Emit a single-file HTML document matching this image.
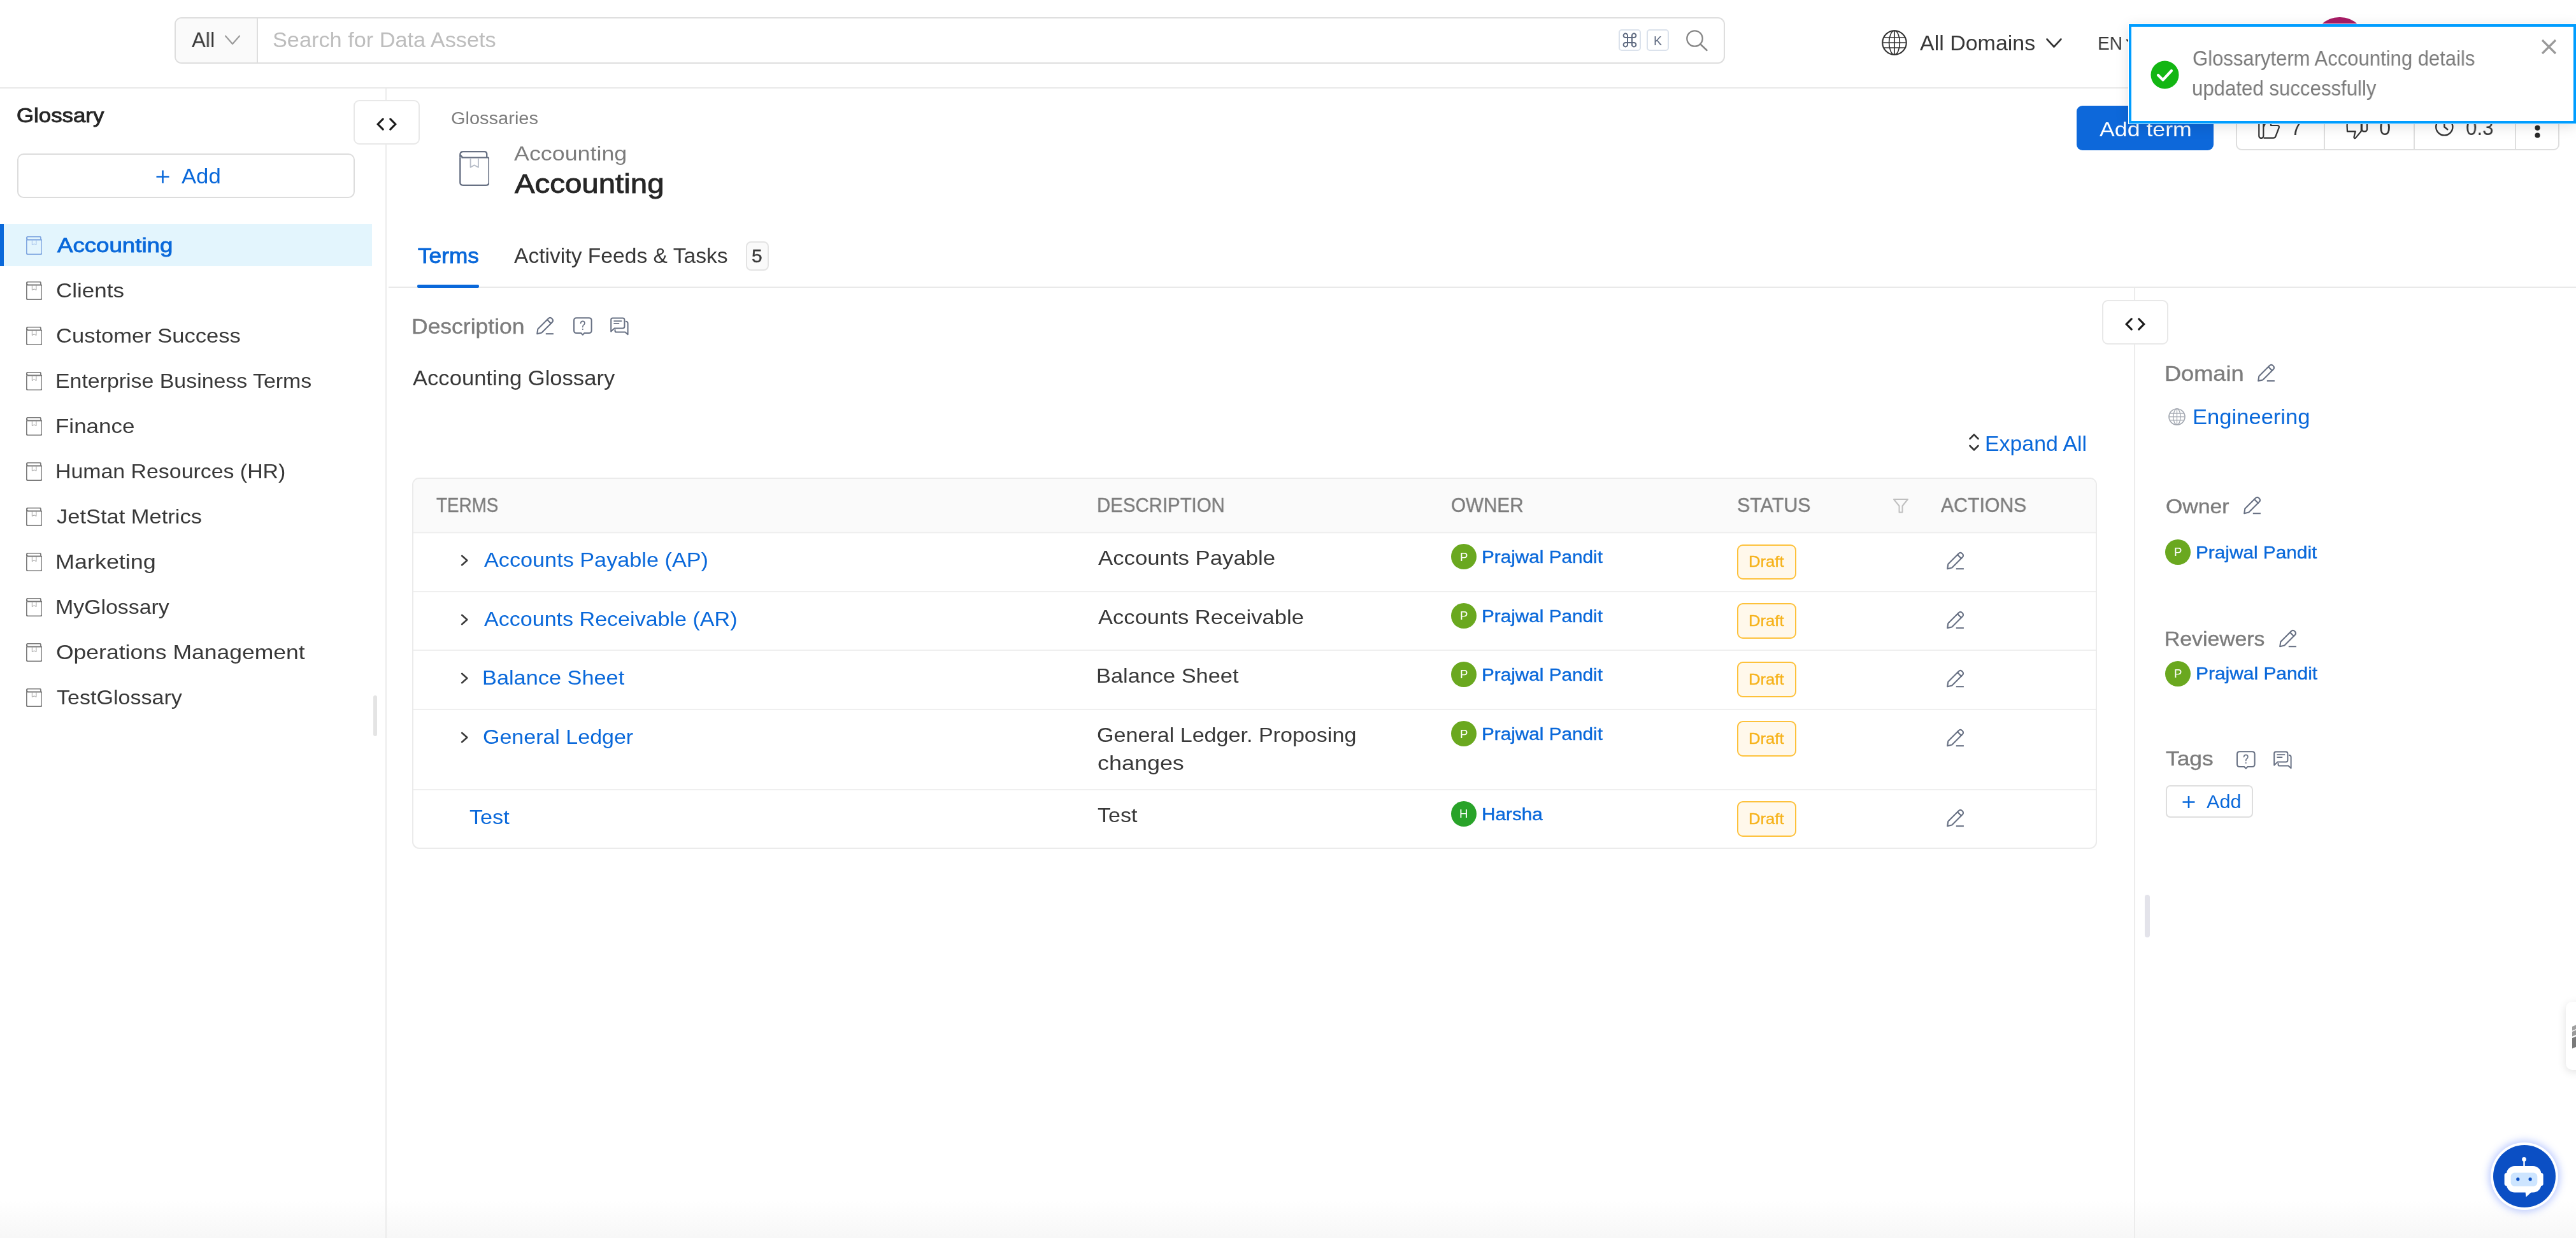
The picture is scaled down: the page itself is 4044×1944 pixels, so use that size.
<!DOCTYPE html><html><head><meta charset="utf-8"><title>Glossary</title><style>html,body{margin:0;padding:0;width:4044px;height:1944px;overflow:hidden;background:#fff;font-family:"Liberation Sans",sans-serif;}.a{position:absolute;}.t{position:absolute;white-space:nowrap;line-height:1;will-change:transform;}</style></head><body><div class="a" style="left:0px;top:1885px;width:4044px;height:59px;background:linear-gradient(to bottom,rgba(247,247,247,0),rgba(247,247,247,1));"></div>
<div class="a" style="left:0px;top:137px;width:4044px;height:2px;background:#e9e9e9;"></div>
<div class="a" style="left:274px;top:27px;width:2434px;height:73px;box-sizing:border-box;border:2px solid #dedede;border-radius:11px;background:#fff;overflow:hidden;"><div class="a" style="left:0;top:0;width:127px;height:73px;background:#fafafa;border-right:2px solid #dedede;"></div></div>
<div class="t" id="t_all" style="left:301.00px;top:46.01px;font-size:33.43px;letter-spacing:0.000px;color:#383838;transform:scaleX(0.9764);transform-origin:0 0;">All</div>
<svg class="a" style="left:352px;top:54px;" width="26" height="18" viewBox="0 0 26 18" fill="none"><path d="M2 2.5 L13 15 L24 2.5" stroke="#9a9a9a" stroke-width="2.2" stroke-linecap="round" stroke-linejoin="round"/></svg>
<div class="t" id="t_search" style="left:428.00px;top:46.31px;font-size:33.28px;letter-spacing:0.000px;color:#bdbdbd;transform:scaleX(1.0309);transform-origin:0 0;">Search for Data Assets</div>
<div class="a" style="left:2541px;top:46px;width:35px;height:34px;box-sizing:border-box;border:2px solid #dbe2ec;border-radius:5px;"></div>
<div class="a" style="left:2585px;top:46px;width:35px;height:34px;box-sizing:border-box;border:2px solid #dbe2ec;border-radius:5px;"></div>
<svg class="a" style="left:2547px;top:51px;" width="23" height="24" viewBox="0 0 23 24" fill="none"><path d="M8 8 H15 V16 H8 Z M8 8 V5.2 A3.2 3.2 0 1 0 4.8 8 H8 M15 8 V5.2 A3.2 3.2 0 1 1 18.2 8 H15 M8 16 V18.8 A3.2 3.2 0 1 1 4.8 16 H8 M15 16 V18.8 A3.2 3.2 0 1 0 18.2 16 H15" stroke="#5f6a80" stroke-width="2"/></svg>
<div class="t" id="t_k" style="left:2595.75px;top:54.50px;font-size:19.62px;letter-spacing:-3.000px;color:#5f6a80;">K</div>
<svg class="a" style="left:2646px;top:46px;" width="36" height="35" viewBox="0 0 36 35" fill="none"><circle cx="14.5" cy="14.5" r="12.2" stroke="#858585" stroke-width="2.3"/><path d="M23.5 23.5 L33.5 33" stroke="#858585" stroke-width="2.5" stroke-linecap="round"/></svg>
<svg class="a" style="left:2954px;top:46.5px;" width="40" height="40" viewBox="0 0 40 40" fill="none"><circle cx="20.0" cy="20.0" r="18.75" stroke="#333" stroke-width="2.1"/><ellipse cx="20.0" cy="20.0" rx="8.4" ry="18.75" stroke="#333" stroke-width="1.6800000000000002"/><path d="M2.1 20.0 H37.9 M20.0 2.1 V37.9 M4.0 12.0 H36.0 M4.0 28.0 H36.0" stroke="#333" stroke-width="1.6800000000000002"/></svg>
<div class="t" id="t_domains" style="left:3014.40px;top:50.51px;font-size:33.14px;letter-spacing:0.000px;color:#383838;transform:scaleX(1.0255);transform-origin:0 0;">All Domains</div>
<svg class="a" style="left:3211px;top:59px;" width="27" height="18" viewBox="0 0 27 18" fill="none"><path d="M2.5 2.5 L13.5 14.5 L24.5 2.5" stroke="#333" stroke-width="2.6" stroke-linecap="round" stroke-linejoin="round"/></svg>
<div class="t" id="t_en" style="left:3293.00px;top:51.72px;font-size:30.38px;letter-spacing:0.000px;color:#383838;transform:scaleX(0.9250);transform-origin:0 0;">EN</div>
<svg class="a" style="left:3337px;top:60px;" width="20" height="14" viewBox="0 0 20 14" fill="none"><path d="M2 2.5 L10 11 L18 2.5" stroke="#333" stroke-width="2.4" stroke-linecap="round"/></svg>
<div class="a" style="left:3632px;top:26.7px;width:81.5px;height:81.5px;border-radius:50%;background:#a81c66;"></div>
<div class="a" style="left:605px;top:139px;width:2px;height:1805px;background:#ececec;"></div>
<div class="t" id="t_glossary" style="left:26.00px;top:166.00px;font-size:31.54px;letter-spacing:0.000px;color:#262626;-webkit-text-stroke:0.9px currentColor;transform:scaleX(1.1041);transform-origin:0 0;">Glossary</div>
<div class="a" style="left:27px;top:241px;width:530px;height:70px;box-sizing:border-box;border:2px solid #dcdcdc;border-radius:10px;background:#fff;"></div>
<svg class="a" style="left:244px;top:266px;" width="23" height="23" viewBox="0 0 23 23" fill="none"><path d="M11.5 1.5 V21.5 M1.5 11.5 H21.5" stroke="#0968da" stroke-width="2.6"/></svg>
<div class="t" id="t_add" style="left:284.55px;top:261.30px;font-size:32.41px;letter-spacing:0.000px;color:#0968da;transform:scaleX(1.0691);transform-origin:0 0;">Add</div>
<div class="a" style="left:0px;top:351.5px;width:584px;height:66.5px;background:#e3f5fd;"></div>
<div class="a" style="left:0px;top:351.5px;width:6px;height:66.5px;background:#0968da;"></div>
<svg class="a" style="left:41px;top:371px;" width="25" height="29" viewBox="0 0 25 29" fill="none"><g transform="scale(0.5435,0.5273)"><path d="M1.3 10.3 V49.5 Q1.3 53.8 5.6 53.8 H41.2 Q45.6 53.8 45.6 49.5 V12.4 Q45.6 10.4 43.6 10.4 H3.4" stroke="#7fa6e0" stroke-width="3.4" stroke-linejoin="round"/><path d="M1.3 10.3 V6 Q1.3 1.2 6 1.2 H38.8 Q42.3 1.2 42.3 4.8 V10.4" stroke="#7fa6e0" stroke-width="3.4" stroke-linejoin="round"/><path d="M1.3 6 L5.2 10.4" stroke="#7fa6e0" stroke-width="3.4"/><path d="M17.2 11 V25.8 L23.1 22.4 L29.3 25.8 V11" stroke="#9fbde9" stroke-width="1.8" stroke-linejoin="round"/></g></svg>
<div class="t" id="t_side0" style="left:89.50px;top:369.00px;font-size:32.27px;letter-spacing:0.000px;color:#0968da;-webkit-text-stroke:0.9px currentColor;transform:scaleX(1.1358);transform-origin:0 0;">Accounting</div>
<svg class="a" style="left:41px;top:442px;" width="25" height="29" viewBox="0 0 25 29" fill="none"><g transform="scale(0.5435,0.5273)"><path d="M1.3 10.3 V49.5 Q1.3 53.8 5.6 53.8 H41.2 Q45.6 53.8 45.6 49.5 V12.4 Q45.6 10.4 43.6 10.4 H3.4" stroke="#7a7a7a" stroke-width="3.4" stroke-linejoin="round"/><path d="M1.3 10.3 V6 Q1.3 1.2 6 1.2 H38.8 Q42.3 1.2 42.3 4.8 V10.4" stroke="#7a7a7a" stroke-width="3.4" stroke-linejoin="round"/><path d="M1.3 6 L5.2 10.4" stroke="#7a7a7a" stroke-width="3.4"/><path d="M17.2 11 V25.8 L23.1 22.4 L29.3 25.8 V11" stroke="#9a9a9a" stroke-width="1.8" stroke-linejoin="round"/></g></svg>
<div class="t" id="t_side1" style="left:88.00px;top:440.00px;font-size:32.27px;letter-spacing:0.000px;color:#383838;transform:scaleX(1.0842);transform-origin:0 0;">Clients</div>
<svg class="a" style="left:41px;top:513px;" width="25" height="29" viewBox="0 0 25 29" fill="none"><g transform="scale(0.5435,0.5273)"><path d="M1.3 10.3 V49.5 Q1.3 53.8 5.6 53.8 H41.2 Q45.6 53.8 45.6 49.5 V12.4 Q45.6 10.4 43.6 10.4 H3.4" stroke="#7a7a7a" stroke-width="3.4" stroke-linejoin="round"/><path d="M1.3 10.3 V6 Q1.3 1.2 6 1.2 H38.8 Q42.3 1.2 42.3 4.8 V10.4" stroke="#7a7a7a" stroke-width="3.4" stroke-linejoin="round"/><path d="M1.3 6 L5.2 10.4" stroke="#7a7a7a" stroke-width="3.4"/><path d="M17.2 11 V25.8 L23.1 22.4 L29.3 25.8 V11" stroke="#9a9a9a" stroke-width="1.8" stroke-linejoin="round"/></g></svg>
<div class="t" id="t_side2" style="left:88.00px;top:511.00px;font-size:32.27px;letter-spacing:0.000px;color:#383838;transform:scaleX(1.0702);transform-origin:0 0;">Customer Success</div>
<svg class="a" style="left:41px;top:584px;" width="25" height="29" viewBox="0 0 25 29" fill="none"><g transform="scale(0.5435,0.5273)"><path d="M1.3 10.3 V49.5 Q1.3 53.8 5.6 53.8 H41.2 Q45.6 53.8 45.6 49.5 V12.4 Q45.6 10.4 43.6 10.4 H3.4" stroke="#7a7a7a" stroke-width="3.4" stroke-linejoin="round"/><path d="M1.3 10.3 V6 Q1.3 1.2 6 1.2 H38.8 Q42.3 1.2 42.3 4.8 V10.4" stroke="#7a7a7a" stroke-width="3.4" stroke-linejoin="round"/><path d="M1.3 6 L5.2 10.4" stroke="#7a7a7a" stroke-width="3.4"/><path d="M17.2 11 V25.8 L23.1 22.4 L29.3 25.8 V11" stroke="#9a9a9a" stroke-width="1.8" stroke-linejoin="round"/></g></svg>
<div class="t" id="t_side3" style="left:87.00px;top:582.00px;font-size:32.27px;letter-spacing:0.000px;color:#383838;transform:scaleX(1.0497);transform-origin:0 0;">Enterprise Business Terms</div>
<svg class="a" style="left:41px;top:655px;" width="25" height="29" viewBox="0 0 25 29" fill="none"><g transform="scale(0.5435,0.5273)"><path d="M1.3 10.3 V49.5 Q1.3 53.8 5.6 53.8 H41.2 Q45.6 53.8 45.6 49.5 V12.4 Q45.6 10.4 43.6 10.4 H3.4" stroke="#7a7a7a" stroke-width="3.4" stroke-linejoin="round"/><path d="M1.3 10.3 V6 Q1.3 1.2 6 1.2 H38.8 Q42.3 1.2 42.3 4.8 V10.4" stroke="#7a7a7a" stroke-width="3.4" stroke-linejoin="round"/><path d="M1.3 6 L5.2 10.4" stroke="#7a7a7a" stroke-width="3.4"/><path d="M17.2 11 V25.8 L23.1 22.4 L29.3 25.8 V11" stroke="#9a9a9a" stroke-width="1.8" stroke-linejoin="round"/></g></svg>
<div class="t" id="t_side4" style="left:87.00px;top:653.00px;font-size:32.27px;letter-spacing:0.000px;color:#383838;transform:scaleX(1.0843);transform-origin:0 0;">Finance</div>
<svg class="a" style="left:41px;top:726px;" width="25" height="29" viewBox="0 0 25 29" fill="none"><g transform="scale(0.5435,0.5273)"><path d="M1.3 10.3 V49.5 Q1.3 53.8 5.6 53.8 H41.2 Q45.6 53.8 45.6 49.5 V12.4 Q45.6 10.4 43.6 10.4 H3.4" stroke="#7a7a7a" stroke-width="3.4" stroke-linejoin="round"/><path d="M1.3 10.3 V6 Q1.3 1.2 6 1.2 H38.8 Q42.3 1.2 42.3 4.8 V10.4" stroke="#7a7a7a" stroke-width="3.4" stroke-linejoin="round"/><path d="M1.3 6 L5.2 10.4" stroke="#7a7a7a" stroke-width="3.4"/><path d="M17.2 11 V25.8 L23.1 22.4 L29.3 25.8 V11" stroke="#9a9a9a" stroke-width="1.8" stroke-linejoin="round"/></g></svg>
<div class="t" id="t_side5" style="left:87.00px;top:724.00px;font-size:32.27px;letter-spacing:0.000px;color:#383838;transform:scaleX(1.0496);transform-origin:0 0;">Human Resources (HR)</div>
<svg class="a" style="left:41px;top:797px;" width="25" height="29" viewBox="0 0 25 29" fill="none"><g transform="scale(0.5435,0.5273)"><path d="M1.3 10.3 V49.5 Q1.3 53.8 5.6 53.8 H41.2 Q45.6 53.8 45.6 49.5 V12.4 Q45.6 10.4 43.6 10.4 H3.4" stroke="#7a7a7a" stroke-width="3.4" stroke-linejoin="round"/><path d="M1.3 10.3 V6 Q1.3 1.2 6 1.2 H38.8 Q42.3 1.2 42.3 4.8 V10.4" stroke="#7a7a7a" stroke-width="3.4" stroke-linejoin="round"/><path d="M1.3 6 L5.2 10.4" stroke="#7a7a7a" stroke-width="3.4"/><path d="M17.2 11 V25.8 L23.1 22.4 L29.3 25.8 V11" stroke="#9a9a9a" stroke-width="1.8" stroke-linejoin="round"/></g></svg>
<div class="t" id="t_side6" style="left:89.00px;top:795.00px;font-size:32.27px;letter-spacing:0.000px;color:#383838;transform:scaleX(1.0681);transform-origin:0 0;">JetStat Metrics</div>
<svg class="a" style="left:41px;top:868px;" width="25" height="29" viewBox="0 0 25 29" fill="none"><g transform="scale(0.5435,0.5273)"><path d="M1.3 10.3 V49.5 Q1.3 53.8 5.6 53.8 H41.2 Q45.6 53.8 45.6 49.5 V12.4 Q45.6 10.4 43.6 10.4 H3.4" stroke="#7a7a7a" stroke-width="3.4" stroke-linejoin="round"/><path d="M1.3 10.3 V6 Q1.3 1.2 6 1.2 H38.8 Q42.3 1.2 42.3 4.8 V10.4" stroke="#7a7a7a" stroke-width="3.4" stroke-linejoin="round"/><path d="M1.3 6 L5.2 10.4" stroke="#7a7a7a" stroke-width="3.4"/><path d="M17.2 11 V25.8 L23.1 22.4 L29.3 25.8 V11" stroke="#9a9a9a" stroke-width="1.8" stroke-linejoin="round"/></g></svg>
<div class="t" id="t_side7" style="left:87.00px;top:866.00px;font-size:32.27px;letter-spacing:0.000px;color:#383838;transform:scaleX(1.1141);transform-origin:0 0;">Marketing</div>
<svg class="a" style="left:41px;top:939px;" width="25" height="29" viewBox="0 0 25 29" fill="none"><g transform="scale(0.5435,0.5273)"><path d="M1.3 10.3 V49.5 Q1.3 53.8 5.6 53.8 H41.2 Q45.6 53.8 45.6 49.5 V12.4 Q45.6 10.4 43.6 10.4 H3.4" stroke="#7a7a7a" stroke-width="3.4" stroke-linejoin="round"/><path d="M1.3 10.3 V6 Q1.3 1.2 6 1.2 H38.8 Q42.3 1.2 42.3 4.8 V10.4" stroke="#7a7a7a" stroke-width="3.4" stroke-linejoin="round"/><path d="M1.3 6 L5.2 10.4" stroke="#7a7a7a" stroke-width="3.4"/><path d="M17.2 11 V25.8 L23.1 22.4 L29.3 25.8 V11" stroke="#9a9a9a" stroke-width="1.8" stroke-linejoin="round"/></g></svg>
<div class="t" id="t_side8" style="left:87.00px;top:937.00px;font-size:32.27px;letter-spacing:0.000px;color:#383838;transform:scaleX(1.0497);transform-origin:0 0;">MyGlossary</div>
<svg class="a" style="left:41px;top:1010px;" width="25" height="29" viewBox="0 0 25 29" fill="none"><g transform="scale(0.5435,0.5273)"><path d="M1.3 10.3 V49.5 Q1.3 53.8 5.6 53.8 H41.2 Q45.6 53.8 45.6 49.5 V12.4 Q45.6 10.4 43.6 10.4 H3.4" stroke="#7a7a7a" stroke-width="3.4" stroke-linejoin="round"/><path d="M1.3 10.3 V6 Q1.3 1.2 6 1.2 H38.8 Q42.3 1.2 42.3 4.8 V10.4" stroke="#7a7a7a" stroke-width="3.4" stroke-linejoin="round"/><path d="M1.3 6 L5.2 10.4" stroke="#7a7a7a" stroke-width="3.4"/><path d="M17.2 11 V25.8 L23.1 22.4 L29.3 25.8 V11" stroke="#9a9a9a" stroke-width="1.8" stroke-linejoin="round"/></g></svg>
<div class="t" id="t_side9" style="left:88.00px;top:1008.00px;font-size:32.27px;letter-spacing:0.000px;color:#383838;transform:scaleX(1.1000);transform-origin:0 0;">Operations Management</div>
<svg class="a" style="left:41px;top:1081px;" width="25" height="29" viewBox="0 0 25 29" fill="none"><g transform="scale(0.5435,0.5273)"><path d="M1.3 10.3 V49.5 Q1.3 53.8 5.6 53.8 H41.2 Q45.6 53.8 45.6 49.5 V12.4 Q45.6 10.4 43.6 10.4 H3.4" stroke="#7a7a7a" stroke-width="3.4" stroke-linejoin="round"/><path d="M1.3 10.3 V6 Q1.3 1.2 6 1.2 H38.8 Q42.3 1.2 42.3 4.8 V10.4" stroke="#7a7a7a" stroke-width="3.4" stroke-linejoin="round"/><path d="M1.3 6 L5.2 10.4" stroke="#7a7a7a" stroke-width="3.4"/><path d="M17.2 11 V25.8 L23.1 22.4 L29.3 25.8 V11" stroke="#9a9a9a" stroke-width="1.8" stroke-linejoin="round"/></g></svg>
<div class="t" id="t_side10" style="left:89.00px;top:1079.00px;font-size:32.27px;letter-spacing:0.000px;color:#383838;transform:scaleX(1.0551);transform-origin:0 0;">TestGlossary</div>
<div class="a" style="left:586px;top:1092px;width:6px;height:64px;background:#e4e4e4;border-radius:3px;"></div>
<div class="a" style="left:554.5px;top:157px;width:104px;height:70px;box-sizing:border-box;border:2px solid #e8e8e8;border-radius:9px;background:#fff;"></div>
<svg class="a" style="left:591px;top:185px;" width="32" height="20" viewBox="0 0 32 20" fill="none"><path d="M10.2 1.8 L2.2 10 L10.2 18.2 M21.8 1.8 L29.8 10 L21.8 18.2" stroke="#1a1a1a" stroke-width="3.1" stroke-linecap="round" stroke-linejoin="miter"/></svg>
<div class="t" id="t_crumb" style="left:708.00px;top:172.01px;font-size:27.62px;letter-spacing:0.000px;color:#7c7c7c;transform:scaleX(1.0502);transform-origin:0 0;">Glossaries</div>
<svg class="a" style="left:721px;top:237px;" width="47" height="55" viewBox="0 0 47 55" fill="none"><g transform="scale(1.0217,1.0000)"><path d="M1.3 10.3 V49.5 Q1.3 53.8 5.6 53.8 H41.2 Q45.6 53.8 45.6 49.5 V12.4 Q45.6 10.4 43.6 10.4 H3.4" stroke="#677083" stroke-width="2.3" stroke-linejoin="round"/><path d="M1.3 10.3 V6 Q1.3 1.2 6 1.2 H38.8 Q42.3 1.2 42.3 4.8 V10.4" stroke="#677083" stroke-width="2.3" stroke-linejoin="round"/><path d="M1.3 6 L5.2 10.4" stroke="#677083" stroke-width="2.3"/><path d="M17.2 11 V25.8 L23.1 22.4 L29.3 25.8 V11" stroke="#b7bdc8" stroke-width="1.8" stroke-linejoin="round"/></g></svg>
<div class="t" id="t_dname" style="left:807.25px;top:224.71px;font-size:31.98px;letter-spacing:0.000px;color:#7c7c7c;transform:scaleX(1.1204);transform-origin:0 0;">Accounting</div>
<div class="t" id="t_title" style="left:807.50px;top:268.31px;font-size:42.01px;letter-spacing:0.000px;color:#262626;-webkit-text-stroke:0.9px currentColor;transform:scaleX(1.1285);transform-origin:0 0;">Accounting</div>
<div class="t" id="t_terms" style="left:656.00px;top:384.70px;font-size:32.99px;letter-spacing:0.000px;color:#0968da;-webkit-text-stroke:0.9px currentColor;transform:scaleX(1.0668);transform-origin:0 0;">Terms</div>
<div class="t" id="t_activity" style="left:807.25px;top:384.70px;font-size:32.99px;letter-spacing:0.000px;color:#383838;transform:scaleX(1.0190);transform-origin:0 0;">Activity Feeds & Tasks</div>
<div class="a" style="left:1171px;top:379px;width:36px;height:46px;box-sizing:border-box;border:2px solid #e3e3e3;border-radius:8px;background:#fafafa;"></div>
<div class="t" id="t_badge" style="left:1180.25px;top:387.01px;font-size:29.80px;letter-spacing:-3.000px;color:#383838;-webkit-text-stroke:0.4px currentColor;">5</div>
<div class="a" style="left:610px;top:450px;width:3434px;height:2px;background:#e9e9e9;"></div>
<div class="a" style="left:655px;top:447px;width:97px;height:5px;background:#0968da;border-radius:2px;"></div>
<div class="t" id="t_desc" style="left:645.55px;top:496.01px;font-size:33.43px;letter-spacing:0.000px;color:#7c7c7c;-webkit-text-stroke:0.4px currentColor;transform:scaleX(1.0620);transform-origin:0 0;">Description</div>
<svg class="a" style="left:841px;top:496.6px;" width="29.5" height="29.5" viewBox="0 0 29.5 29.5" fill="none"><g stroke="#677083" stroke-width="2.1" stroke-linejoin="round" stroke-linecap="round"><path d="M2.2 27.3 L3.3 19.8 L19.8 3.2 Q22.6 0.6 25.6 3.4 Q28.3 6.3 25.8 9.1 L9.3 25.6 Z"/><path d="M18.0 5.0 L24.0 11.0"/></g><path d="M15.8 27.2 H27.9" stroke="#677083" stroke-width="2.1"/></svg>
<svg class="a" style="left:899.5px;top:497.5px;" width="30" height="29" viewBox="0 0 30 29" fill="none"><path d="M5 1.2 H24.6 Q28.6 1.2 28.6 5.2 V21 Q28.6 25 24.6 25 H17.4 L14.8 27.8 L12.2 25 H5 Q1 25 1 21 V5.2 Q1 1.2 5 1.2 Z" stroke="#677083" stroke-width="2" stroke-linejoin="round"/><path d="M11.6 9.6 Q11.8 6.4 14.8 6.4 Q17.9 6.4 17.9 9.4 Q17.9 11.3 16 12.4 Q14.8 13.2 14.8 15.6" stroke="#677083" stroke-width="1.6" stroke-linecap="round"/><circle cx="14.8" cy="19" r="1.05" fill="#677083"/></svg>
<svg class="a" style="left:957.5px;top:498px;" width="29" height="29" viewBox="0 0 29 29" fill="none"><path d="M1.2 22.6 V4 Q1.2 1.5 3.7 1.5 H19.6 Q22.4 1.5 22.4 4.3 V14.8 Q22.4 17.6 19.6 17.6 H6.4 Z" stroke="#677083" stroke-width="2" stroke-linejoin="round"/><path d="M5.4 6.2 H18.2 M5.4 10.2 H14.2" stroke="#677083" stroke-width="1.7"/><path d="M24 6.8 Q27.6 6.8 27.6 9.8 V27.2 L23.4 23.6 H9.6 Q7.5 23.6 7.5 21.2 V19.3" stroke="#677083" stroke-width="2" stroke-linejoin="round"/></svg>
<div class="t" id="t_descval" style="left:647.55px;top:578.00px;font-size:32.56px;letter-spacing:0.000px;color:#383838;transform:scaleX(1.0627);transform-origin:0 0;">Accounting Glossary</div>
<svg class="a" style="left:3089px;top:679px;" width="20" height="31" viewBox="0 0 20 31" fill="none"><path d="M3.5 10 L10 3.5 L16.5 10 M3.5 21 L10 27.5 L16.5 21" stroke="#333" stroke-width="2.6" stroke-linecap="round" stroke-linejoin="round"/></svg>
<div class="t" id="t_expand" style="left:3116.00px;top:680.01px;font-size:32.99px;letter-spacing:0.000px;color:#0968da;transform:scaleX(1.0267);transform-origin:0 0;">Expand All</div>
<div class="a" style="left:647px;top:749.5px;width:2645px;height:583px;box-sizing:border-box;border:2px solid #ebebeb;border-radius:11px;overflow:hidden;background:#fff;"><div class="a" style="left:0;top:0;width:2645px;height:86px;background:#fafafa;"></div></div>
<div class="a" style="left:649px;top:835px;width:2641px;height:2px;background:#efefef;"></div>
<div class="a" style="left:649px;top:927.5px;width:2641px;height:2.0px;background:#efefef;"></div>
<div class="a" style="left:649px;top:1019.5px;width:2641px;height:2.0px;background:#efefef;"></div>
<div class="a" style="left:649px;top:1112.5px;width:2641px;height:2.0px;background:#efefef;"></div>
<div class="a" style="left:649px;top:1238.5px;width:2641px;height:2.0px;background:#efefef;"></div>
<div class="t" id="h_terms" style="left:685.00px;top:778.00px;font-size:31.25px;letter-spacing:0.000px;color:#7c7c7c;-webkit-text-stroke:0.4px currentColor;transform:scaleX(0.8900);transform-origin:0 0;">TERMS</div>
<div class="t" id="h_desc" style="left:1722.40px;top:778.00px;font-size:31.25px;letter-spacing:0.000px;color:#7c7c7c;-webkit-text-stroke:0.4px currentColor;transform:scaleX(0.9402);transform-origin:0 0;">DESCRIPTION</div>
<div class="t" id="h_owner" style="left:2278.00px;top:778.00px;font-size:31.25px;letter-spacing:0.000px;color:#7c7c7c;-webkit-text-stroke:0.4px currentColor;transform:scaleX(0.9488);transform-origin:0 0;">OWNER</div>
<div class="t" id="h_status" style="left:2727.30px;top:778.00px;font-size:31.25px;letter-spacing:0.000px;color:#7c7c7c;-webkit-text-stroke:0.4px currentColor;transform:scaleX(0.9736);transform-origin:0 0;">STATUS</div>
<div class="t" id="h_actions" style="left:3046.60px;top:778.00px;font-size:31.25px;letter-spacing:0.000px;color:#7c7c7c;-webkit-text-stroke:0.4px currentColor;transform:scaleX(0.9670);transform-origin:0 0;">ACTIONS</div>
<svg class="a" style="left:2971px;top:782px;" width="26" height="24" viewBox="0 0 26 24" fill="none"><path d="M2 2 H24 L15.5 12.5 V22.5 H10.5 V12.5 Z" stroke="#bfbfbf" stroke-width="2" stroke-linejoin="round"/></svg>
<svg class="a" style="left:723px;top:871.2px;" width="13" height="18" viewBox="0 0 13 18" fill="none"><path d="M2.2 1.8 L10.3 9 L2.2 16.2" stroke="#3b3b3b" stroke-width="2.6" stroke-linecap="round" stroke-linejoin="round"/></svg>
<div class="t" id="r0_term" style="left:760.25px;top:863.10px;font-size:32.12px;letter-spacing:0.000px;color:#0968da;transform:scaleX(1.0659);transform-origin:0 0;">Accounts Payable (AP)</div>
<div class="t" id="r0_desc0" style="left:1724.30px;top:861.01px;font-size:31.69px;letter-spacing:0.000px;color:#383838;transform:scaleX(1.0965);transform-origin:0 0;">Accounts Payable</div>
<div class="a" style="left:2277.5px;top:854.4000000000001px;width:40px;height:40px;border-radius:50%;background:#6aa81f;"></div>
<div class="t" id="r0_av" style="left:2291.65px;top:865.80px;font-size:18.60px;letter-spacing:-1.200px;color:#fff;">P</div>
<div class="t" id="r0_owner" style="left:2325.85px;top:860.20px;font-size:28.20px;letter-spacing:0.000px;color:#0968da;-webkit-text-stroke:0.4px currentColor;transform:scaleX(1.0542);transform-origin:0 0;">Prajwal Pandit</div>
<div class="a" style="left:2727px;top:854.7px;width:93px;height:55.5px;box-sizing:border-box;border:2px solid #fdc13a;border-radius:9px;background:#fff8eb;"></div>
<div class="t" id="r0_draft" style="left:2745.00px;top:870.20px;font-size:24.71px;letter-spacing:0.000px;color:#f6b21a;-webkit-text-stroke:0.4px currentColor;transform:scaleX(1.0385);transform-origin:0 0;">Draft</div>
<svg class="a" style="left:3055px;top:866.0px;" width="29.5" height="29.5" viewBox="0 0 29.5 29.5" fill="none"><g stroke="#677083" stroke-width="2.1" stroke-linejoin="round" stroke-linecap="round"><path d="M2.2 27.3 L3.3 19.8 L19.8 3.2 Q22.6 0.6 25.6 3.4 Q28.3 6.3 25.8 9.1 L9.3 25.6 Z"/><path d="M18.0 5.0 L24.0 11.0"/></g><path d="M15.8 27.2 H27.9" stroke="#677083" stroke-width="2.1"/></svg>
<svg class="a" style="left:723px;top:963.8px;" width="13" height="18" viewBox="0 0 13 18" fill="none"><path d="M2.2 1.8 L10.3 9 L2.2 16.2" stroke="#3b3b3b" stroke-width="2.6" stroke-linecap="round" stroke-linejoin="round"/></svg>
<div class="t" id="r1_term" style="left:760.25px;top:955.71px;font-size:32.12px;letter-spacing:0.000px;color:#0968da;transform:scaleX(1.0607);transform-origin:0 0;">Accounts Receivable (AR)</div>
<div class="t" id="r1_desc0" style="left:1724.30px;top:953.60px;font-size:31.69px;letter-spacing:0.000px;color:#383838;transform:scaleX(1.0912);transform-origin:0 0;">Accounts Receivable</div>
<div class="a" style="left:2277.5px;top:947.0px;width:40px;height:40px;border-radius:50%;background:#6aa81f;"></div>
<div class="t" id="r1_av" style="left:2291.65px;top:958.41px;font-size:18.60px;letter-spacing:-1.200px;color:#fff;">P</div>
<div class="t" id="r1_owner" style="left:2325.85px;top:952.81px;font-size:28.20px;letter-spacing:0.000px;color:#0968da;-webkit-text-stroke:0.4px currentColor;transform:scaleX(1.0542);transform-origin:0 0;">Prajwal Pandit</div>
<div class="a" style="left:2727px;top:947.3px;width:93px;height:55.5px;box-sizing:border-box;border:2px solid #fdc13a;border-radius:9px;background:#fff8eb;"></div>
<div class="t" id="r1_draft" style="left:2745.00px;top:962.81px;font-size:24.71px;letter-spacing:0.000px;color:#f6b21a;-webkit-text-stroke:0.4px currentColor;transform:scaleX(1.0385);transform-origin:0 0;">Draft</div>
<svg class="a" style="left:3055px;top:958.5999999999999px;" width="29.5" height="29.5" viewBox="0 0 29.5 29.5" fill="none"><g stroke="#677083" stroke-width="2.1" stroke-linejoin="round" stroke-linecap="round"><path d="M2.2 27.3 L3.3 19.8 L19.8 3.2 Q22.6 0.6 25.6 3.4 Q28.3 6.3 25.8 9.1 L9.3 25.6 Z"/><path d="M18.0 5.0 L24.0 11.0"/></g><path d="M15.8 27.2 H27.9" stroke="#677083" stroke-width="2.1"/></svg>
<svg class="a" style="left:723px;top:1055.7px;" width="13" height="18" viewBox="0 0 13 18" fill="none"><path d="M2.2 1.8 L10.3 9 L2.2 16.2" stroke="#3b3b3b" stroke-width="2.6" stroke-linecap="round" stroke-linejoin="round"/></svg>
<div class="t" id="r2_term" style="left:757.25px;top:1047.60px;font-size:32.12px;letter-spacing:0.000px;color:#0968da;transform:scaleX(1.0686);transform-origin:0 0;">Balance Sheet</div>
<div class="t" id="r2_desc0" style="left:1721.40px;top:1045.51px;font-size:31.69px;letter-spacing:0.000px;color:#383838;transform:scaleX(1.0842);transform-origin:0 0;">Balance Sheet</div>
<div class="a" style="left:2277.5px;top:1038.9px;width:40px;height:40px;border-radius:50%;background:#6aa81f;"></div>
<div class="t" id="r2_av" style="left:2291.65px;top:1050.30px;font-size:18.60px;letter-spacing:-1.200px;color:#fff;">P</div>
<div class="t" id="r2_owner" style="left:2325.85px;top:1044.70px;font-size:28.20px;letter-spacing:0.000px;color:#0968da;-webkit-text-stroke:0.4px currentColor;transform:scaleX(1.0542);transform-origin:0 0;">Prajwal Pandit</div>
<div class="a" style="left:2727px;top:1039.2px;width:93px;height:55.5px;box-sizing:border-box;border:2px solid #fdc13a;border-radius:9px;background:#fff8eb;"></div>
<div class="t" id="r2_draft" style="left:2745.00px;top:1054.70px;font-size:24.71px;letter-spacing:0.000px;color:#f6b21a;-webkit-text-stroke:0.4px currentColor;transform:scaleX(1.0385);transform-origin:0 0;">Draft</div>
<svg class="a" style="left:3055px;top:1050.5px;" width="29.5" height="29.5" viewBox="0 0 29.5 29.5" fill="none"><g stroke="#677083" stroke-width="2.1" stroke-linejoin="round" stroke-linecap="round"><path d="M2.2 27.3 L3.3 19.8 L19.8 3.2 Q22.6 0.6 25.6 3.4 Q28.3 6.3 25.8 9.1 L9.3 25.6 Z"/><path d="M18.0 5.0 L24.0 11.0"/></g><path d="M15.8 27.2 H27.9" stroke="#677083" stroke-width="2.1"/></svg>
<svg class="a" style="left:723px;top:1148.9px;" width="13" height="18" viewBox="0 0 13 18" fill="none"><path d="M2.2 1.8 L10.3 9 L2.2 16.2" stroke="#3b3b3b" stroke-width="2.6" stroke-linecap="round" stroke-linejoin="round"/></svg>
<div class="t" id="r3_term" style="left:758.25px;top:1140.81px;font-size:32.12px;letter-spacing:0.000px;color:#0968da;transform:scaleX(1.0584);transform-origin:0 0;">General Ledger</div>
<div class="t" id="r3_desc0" style="left:1722.30px;top:1138.70px;font-size:31.69px;letter-spacing:0.000px;color:#383838;transform:scaleX(1.0755);transform-origin:0 0;">General Ledger. Proposing</div>
<div class="t" id="r3_desc1" style="left:1723.30px;top:1182.70px;font-size:31.69px;letter-spacing:0.000px;color:#383838;transform:scaleX(1.1337);transform-origin:0 0;">changes</div>
<div class="a" style="left:2277.5px;top:1132.1000000000001px;width:40px;height:40px;border-radius:50%;background:#6aa81f;"></div>
<div class="t" id="r3_av" style="left:2291.65px;top:1143.50px;font-size:18.60px;letter-spacing:-1.200px;color:#fff;">P</div>
<div class="t" id="r3_owner" style="left:2325.85px;top:1137.90px;font-size:28.20px;letter-spacing:0.000px;color:#0968da;-webkit-text-stroke:0.4px currentColor;transform:scaleX(1.0542);transform-origin:0 0;">Prajwal Pandit</div>
<div class="a" style="left:2727px;top:1132.4px;width:93px;height:55.5px;box-sizing:border-box;border:2px solid #fdc13a;border-radius:9px;background:#fff8eb;"></div>
<div class="t" id="r3_draft" style="left:2745.00px;top:1147.90px;font-size:24.71px;letter-spacing:0.000px;color:#f6b21a;-webkit-text-stroke:0.4px currentColor;transform:scaleX(1.0385);transform-origin:0 0;">Draft</div>
<svg class="a" style="left:3055px;top:1143.7px;" width="29.5" height="29.5" viewBox="0 0 29.5 29.5" fill="none"><g stroke="#677083" stroke-width="2.1" stroke-linejoin="round" stroke-linecap="round"><path d="M2.2 27.3 L3.3 19.8 L19.8 3.2 Q22.6 0.6 25.6 3.4 Q28.3 6.3 25.8 9.1 L9.3 25.6 Z"/><path d="M18.0 5.0 L24.0 11.0"/></g><path d="M15.8 27.2 H27.9" stroke="#677083" stroke-width="2.1"/></svg>
<div class="t" id="r4_term" style="left:736.70px;top:1266.60px;font-size:32.12px;letter-spacing:0.000px;color:#0968da;transform:scaleX(1.0650);transform-origin:0 0;">Test</div>
<div class="t" id="r4_desc0" style="left:1723.30px;top:1264.51px;font-size:31.69px;letter-spacing:0.000px;color:#383838;transform:scaleX(1.0745);transform-origin:0 0;">Test</div>
<div class="a" style="left:2277.5px;top:1257.9px;width:40px;height:40px;border-radius:50%;background:#29a329;"></div>
<div class="t" id="r4_av" style="left:2291.40px;top:1269.30px;font-size:18.60px;letter-spacing:-2.200px;color:#fff;">H</div>
<div class="t" id="r4_owner" style="left:2325.85px;top:1263.70px;font-size:28.20px;letter-spacing:0.000px;color:#0968da;-webkit-text-stroke:0.4px currentColor;transform:scaleX(1.0554);transform-origin:0 0;">Harsha</div>
<div class="a" style="left:2727px;top:1258.2px;width:93px;height:55.5px;box-sizing:border-box;border:2px solid #fdc13a;border-radius:9px;background:#fff8eb;"></div>
<div class="t" id="r4_draft" style="left:2745.00px;top:1273.70px;font-size:24.71px;letter-spacing:0.000px;color:#f6b21a;-webkit-text-stroke:0.4px currentColor;transform:scaleX(1.0385);transform-origin:0 0;">Draft</div>
<svg class="a" style="left:3055px;top:1269.5px;" width="29.5" height="29.5" viewBox="0 0 29.5 29.5" fill="none"><g stroke="#677083" stroke-width="2.1" stroke-linejoin="round" stroke-linecap="round"><path d="M2.2 27.3 L3.3 19.8 L19.8 3.2 Q22.6 0.6 25.6 3.4 Q28.3 6.3 25.8 9.1 L9.3 25.6 Z"/><path d="M18.0 5.0 L24.0 11.0"/></g><path d="M15.8 27.2 H27.9" stroke="#677083" stroke-width="2.1"/></svg>
<div class="a" style="left:3350px;top:452px;width:2px;height:1492px;background:#ececec;"></div>
<div class="a" style="left:3299.5px;top:470.5px;width:104px;height:70px;box-sizing:border-box;border:2px solid #e8e8e8;border-radius:9px;background:#fff;"></div>
<svg class="a" style="left:3336px;top:498.5px;" width="32" height="20" viewBox="0 0 32 20" fill="none"><path d="M10.2 1.8 L2.2 10 L10.2 18.2 M21.8 1.8 L29.8 10 L21.8 18.2" stroke="#1a1a1a" stroke-width="3.1" stroke-linecap="round" stroke-linejoin="miter"/></svg>
<div class="t" id="p_domain" style="left:3397.60px;top:571.01px;font-size:32.85px;letter-spacing:0.000px;color:#7c7c7c;-webkit-text-stroke:0.4px currentColor;transform:scaleX(1.1013);transform-origin:0 0;">Domain</div>
<svg class="a" style="left:3542.6px;top:570.5px;" width="29.5" height="29.5" viewBox="0 0 29.5 29.5" fill="none"><g stroke="#677083" stroke-width="2.1" stroke-linejoin="round" stroke-linecap="round"><path d="M2.2 27.3 L3.3 19.8 L19.8 3.2 Q22.6 0.6 25.6 3.4 Q28.3 6.3 25.8 9.1 L9.3 25.6 Z"/><path d="M18.0 5.0 L24.0 11.0"/></g><path d="M15.8 27.2 H27.9" stroke="#677083" stroke-width="2.1"/></svg>
<svg class="a" style="left:3404px;top:641px;" width="27" height="27" viewBox="0 0 27 27" fill="none"><circle cx="13.5" cy="13.5" r="12.5" stroke="#a3a8b1" stroke-width="1.6"/><ellipse cx="13.5" cy="13.5" rx="5.67" ry="12.5" stroke="#a3a8b1" stroke-width="1.2800000000000002"/><path d="M1.6 13.5 H25.4 M13.5 1.6 V25.4 M2.7 8.1 H24.3 M2.7 18.9 H24.3" stroke="#a3a8b1" stroke-width="1.2800000000000002"/></svg>
<div class="t" id="p_eng" style="left:3442.00px;top:638.01px;font-size:32.99px;letter-spacing:0.000px;color:#0968da;transform:scaleX(1.0479);transform-origin:0 0;">Engineering</div>
<div class="t" id="p_owner" style="left:3399.60px;top:779.90px;font-size:31.83px;letter-spacing:0.000px;color:#7c7c7c;-webkit-text-stroke:0.4px currentColor;transform:scaleX(1.0609);transform-origin:0 0;">Owner</div>
<svg class="a" style="left:3520.5px;top:779px;" width="29.5" height="29.5" viewBox="0 0 29.5 29.5" fill="none"><g stroke="#677083" stroke-width="2.1" stroke-linejoin="round" stroke-linecap="round"><path d="M2.2 27.3 L3.3 19.8 L19.8 3.2 Q22.6 0.6 25.6 3.4 Q28.3 6.3 25.8 9.1 L9.3 25.6 Z"/><path d="M18.0 5.0 L24.0 11.0"/></g><path d="M15.8 27.2 H27.9" stroke="#677083" stroke-width="2.1"/></svg>
<div class="a" style="left:3399.2px;top:847px;width:40px;height:40px;border-radius:50%;background:#6aa81f;"></div>
<div class="t" id="p_av1" style="left:3413.45px;top:858.41px;font-size:18.60px;letter-spacing:-1.200px;color:#fff;">P</div>
<div class="t" id="p_own" style="left:3447.45px;top:853.60px;font-size:27.62px;letter-spacing:0.000px;color:#0968da;-webkit-text-stroke:0.4px currentColor;transform:scaleX(1.0781);transform-origin:0 0;">Prajwal Pandit</div>
<div class="t" id="p_rev" style="left:3398.40px;top:988.11px;font-size:31.54px;letter-spacing:0.000px;color:#7c7c7c;-webkit-text-stroke:0.4px currentColor;transform:scaleX(1.0697);transform-origin:0 0;">Reviewers</div>
<svg class="a" style="left:3577px;top:987.5px;" width="29.5" height="29.5" viewBox="0 0 29.5 29.5" fill="none"><g stroke="#677083" stroke-width="2.1" stroke-linejoin="round" stroke-linecap="round"><path d="M2.2 27.3 L3.3 19.8 L19.8 3.2 Q22.6 0.6 25.6 3.4 Q28.3 6.3 25.8 9.1 L9.3 25.6 Z"/><path d="M18.0 5.0 L24.0 11.0"/></g><path d="M15.8 27.2 H27.9" stroke="#677083" stroke-width="2.1"/></svg>
<div class="a" style="left:3399.2px;top:1037.7px;width:40px;height:40px;border-radius:50%;background:#6aa81f;"></div>
<div class="t" id="p_av2" style="left:3413.45px;top:1049.11px;font-size:18.60px;letter-spacing:-1.200px;color:#fff;">P</div>
<div class="t" id="p_rev1" style="left:3446.55px;top:1045.10px;font-size:27.03px;letter-spacing:0.000px;color:#0968da;-webkit-text-stroke:0.4px currentColor;transform:scaleX(1.1071);transform-origin:0 0;">Prajwal Pandit</div>
<div class="t" id="p_tags" style="left:3400.40px;top:1174.81px;font-size:31.98px;letter-spacing:0.000px;color:#7c7c7c;-webkit-text-stroke:0.4px currentColor;transform:scaleX(1.1064);transform-origin:0 0;">Tags</div>
<svg class="a" style="left:3511px;top:1179px;" width="30" height="29" viewBox="0 0 30 29" fill="none"><path d="M5 1.2 H24.6 Q28.6 1.2 28.6 5.2 V21 Q28.6 25 24.6 25 H17.4 L14.8 27.8 L12.2 25 H5 Q1 25 1 21 V5.2 Q1 1.2 5 1.2 Z" stroke="#677083" stroke-width="2" stroke-linejoin="round"/><path d="M11.6 9.6 Q11.8 6.4 14.8 6.4 Q17.9 6.4 17.9 9.4 Q17.9 11.3 16 12.4 Q14.8 13.2 14.8 15.6" stroke="#677083" stroke-width="1.6" stroke-linecap="round"/><circle cx="14.8" cy="19" r="1.05" fill="#677083"/></svg>
<svg class="a" style="left:3569px;top:1179px;" width="29" height="29" viewBox="0 0 29 29" fill="none"><path d="M1.2 22.6 V4 Q1.2 1.5 3.7 1.5 H19.6 Q22.4 1.5 22.4 4.3 V14.8 Q22.4 17.6 19.6 17.6 H6.4 Z" stroke="#677083" stroke-width="2" stroke-linejoin="round"/><path d="M5.4 6.2 H18.2 M5.4 10.2 H14.2" stroke="#677083" stroke-width="1.7"/><path d="M24 6.8 Q27.6 6.8 27.6 9.8 V27.2 L23.4 23.6 H9.6 Q7.5 23.6 7.5 21.2 V19.3" stroke="#677083" stroke-width="2" stroke-linejoin="round"/></svg>
<div class="a" style="left:3400px;top:1233px;width:137px;height:51px;box-sizing:border-box;border:2px solid #dedede;border-radius:7px;background:#fff;"></div>
<svg class="a" style="left:3425px;top:1249px;" width="22" height="21" viewBox="0 0 22 21" fill="none"><path d="M11 1 V20 M1.5 10.5 H20.5" stroke="#0968da" stroke-width="2.6"/></svg>
<div class="t" id="p_add" style="left:3463.70px;top:1244.50px;font-size:29.07px;letter-spacing:0.000px;color:#0968da;transform:scaleX(1.0521);transform-origin:0 0;">Add</div>
<div class="a" style="left:3367px;top:1405px;width:7.5px;height:67px;background:#e3e3ea;border-radius:4px;"></div>
<div class="a" style="left:3260px;top:165.5px;width:214.5px;height:70.5px;border-radius:9px;background:#0d68da;"></div>
<div class="t" id="b_addterm" style="left:3296.00px;top:186.50px;font-size:32.27px;letter-spacing:0.000px;color:#fff;transform:scaleX(1.1063);transform-origin:0 0;">Add term</div>
<div class="a" style="left:3510px;top:165.5px;width:508px;height:70.5px;box-sizing:border-box;border:2px solid #dedede;border-radius:9px;background:#fff;"></div>
<div class="a" style="left:3648px;top:167px;width:2px;height:67px;background:#dedede;"></div>
<div class="a" style="left:3788.5px;top:167px;width:2.0px;height:67px;background:#dedede;"></div>
<div class="a" style="left:3948px;top:167px;width:2px;height:67px;background:#dedede;"></div>
<div class="t" id="b_7" style="left:3596.10px;top:185.00px;font-size:32.70px;letter-spacing:-5.600px;color:#383838;">7</div>
<div class="t" id="b_0" style="left:3735.00px;top:185.00px;font-size:32.70px;letter-spacing:-2.000px;color:#383838;">0</div>
<div class="t" id="b_03" style="left:3871.00px;top:185.00px;font-size:32.70px;letter-spacing:0.000px;color:#383838;transform:scaleX(0.9569);transform-origin:0 0;">0.3</div>
<svg class="a" style="left:3544px;top:180px;" width="36" height="40" viewBox="0 0 36 40" fill="none"><rect x="2.3" y="6" width="7" height="30.8" rx="3.2" stroke="#333" stroke-width="2.2"/><path d="M9.6 19 L16 6 Q19 3 21 7 V17 H31 Q34.5 17 33.7 20.5 L28.5 34 Q27.5 36.6 25 36.6 H9.6" stroke="#333" stroke-width="2.2" stroke-linejoin="round"/></svg>
<svg class="a" style="left:3682px;top:180px;" width="36" height="40" viewBox="0 0 36 40" fill="none"><rect x="25.8" y="3" width="8.2" height="23.3" rx="3.2" stroke="#333" stroke-width="2.2"/><path d="M3 8 Q2.2 18 3 26.3 H15.7 L13.4 35.6 Q14 38.2 16.2 36.4 L24.8 26 V8" stroke="#333" stroke-width="2.2" stroke-linejoin="round"/></svg>
<svg class="a" style="left:3821px;top:180px;" width="32" height="40" viewBox="0 0 32 40" fill="none"><circle cx="16.3" cy="19.3" r="13.1" stroke="#333" stroke-width="2.4"/><path d="M16.3 11 V19.3 L21.3 23.3" stroke="#333" stroke-width="2.4" stroke-linecap="round"/></svg>
<svg class="a" style="left:3977px;top:180px;" width="13" height="40" viewBox="0 0 13 40" fill="none"><circle cx="6.5" cy="9" r="4.1" fill="#292929"/><circle cx="6.5" cy="20.8" r="4.1" fill="#292929"/><circle cx="6.5" cy="32.5" r="4.1" fill="#292929"/></svg>
<div class="a" style="left:3342px;top:38px;width:702px;height:155.5px;box-sizing:border-box;border:4px solid #009dff;background:#fff;box-shadow:0 0 0 1px #fff,0 4px 20px rgba(0,0,0,0.13);"></div>
<svg class="a" style="left:3375.5px;top:95px;" width="45" height="45" viewBox="0 0 45 45" fill="none"><circle cx="22.5" cy="22.5" r="22" fill="#13b613"/><path d="M12 23 L19.5 30.5 L33 16" stroke="#fff" stroke-width="4.2" stroke-linecap="round" stroke-linejoin="round"/></svg>
<div class="t" id="toast1" style="left:3441.85px;top:75.72px;font-size:32.70px;letter-spacing:0.000px;color:#7a7a7a;transform:scaleX(0.9497);transform-origin:0 0;">Glossaryterm Accounting details</div>
<div class="t" id="toast2" style="left:3441.00px;top:122.50px;font-size:32.70px;letter-spacing:0.000px;color:#7a7a7a;transform:scaleX(0.9540);transform-origin:0 0;">updated successfully</div>
<svg class="a" style="left:3989px;top:61px;" width="25" height="25" viewBox="0 0 25 25" fill="none"><path d="M2 2 L23 23 M23 2 L2 23" stroke="#9a9a9a" stroke-width="3.2"/></svg>
<div class="a" style="left:3910px;top:1794px;width:106px;height:106px;border-radius:50%;background:#fff;box-shadow:0 0 12px 3px rgba(70,110,255,0.35);"></div>
<div class="a" style="left:3914px;top:1798px;width:98px;height:98px;border-radius:50%;background:#0b4fc4;"></div>
<svg class="a" style="left:3928px;top:1812px;" width="70" height="70" viewBox="0 0 70 70" fill="none"><path d="M34.5 10 V20" stroke="#fff" stroke-width="2.4"/><circle cx="34.5" cy="8.4" r="3.3" fill="#fff"/><rect x="6.8" y="19" width="54.7" height="41.6" rx="13" fill="#fff"/><rect x="3.6" y="30" width="6" height="20" rx="3" fill="#fff"/><rect x="58.6" y="30" width="6" height="20" rx="3" fill="#fff"/><path d="M36.5 59 L47 59 L37.5 67.8 Z" fill="#fff"/><rect x="13.6" y="29.5" width="41.7" height="21.2" rx="6" fill="#cde5ff"/><circle cx="24.8" cy="39.7" r="2.6" fill="#0b4fc4"/><circle cx="44.1" cy="39.7" r="2.6" fill="#0b4fc4"/></svg>
<div class="a" style="left:4028px;top:1573px;width:40px;height:107px;border-radius:10px;background:#fff;box-shadow:0 3px 14px rgba(0,0,0,0.12);"></div>
<svg class="a" style="left:4037px;top:1605px;" width="7" height="45" viewBox="0 0 7 45" fill="none"><path d="M1 7 L7 4.5 V11 L1 13.5 Z" fill="#a0a0a0"/><path d="M1 15 L7 12.5 V20 L1 22.5 Z" fill="#9a9a9a"/><path d="M1 25 L7 22.5 V39 L1 41.5 Z" fill="#7a7a7a"/></svg></body></html>
